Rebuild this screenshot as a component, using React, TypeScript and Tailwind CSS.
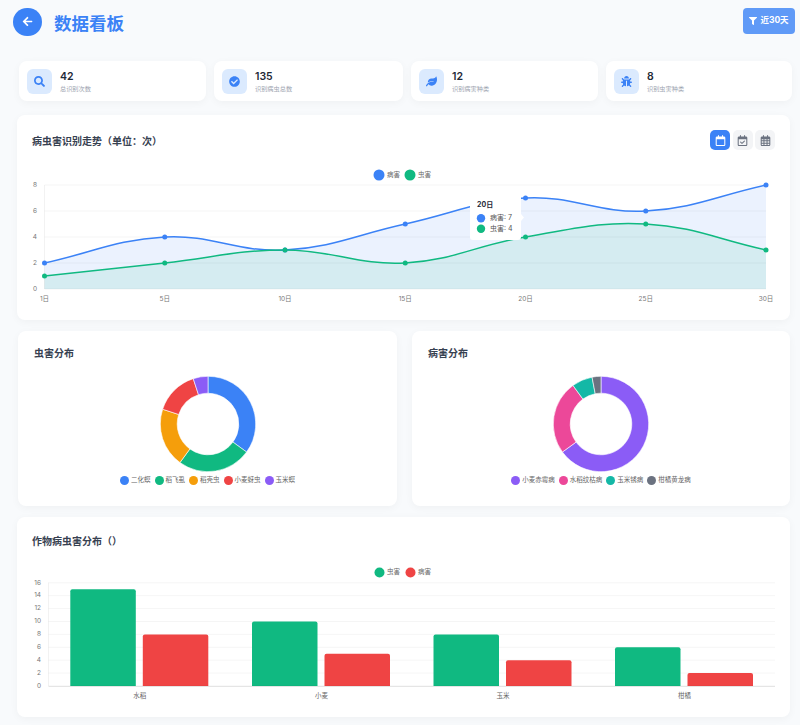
import { ReactNode } from "react";
import { FaArrowLeft, FaBug, FaCheckCircle, FaFilter, FaLeaf, FaSearch } from "react-icons/fa";
import { FaRegCalendar, FaRegCalendarCheck, FaRegCalendarDays } from "react-icons/fa6";

const BLUE = "#3b82f6";
const GREEN = "#10b981";
const RED = "#ef4444";

const stats = [
  { value: "42", label: "总识别次数", icon: <FaSearch /> },
  { value: "135", label: "识别病虫总数", icon: <FaCheckCircle /> },
  { value: "12", label: "识别病害种类", icon: <FaLeaf /> },
  { value: "8", label: "识别虫害种类", icon: <FaBug /> },
];

const days = ["1日", "5日", "10日", "15日", "20日", "25日", "30日"];
const diseaseTrend = [2, 4, 3, 5, 7, 6, 8];
const pestTrend = [1, 2, 3, 2, 4, 5, 3];

const pestSlices = [
  { name: "二化螟", value: 35, color: BLUE },
  { name: "稻飞虱", value: 25, color: GREEN },
  { name: "稻壳虫", value: 20, color: "#f59e0b" },
  { name: "小麦蚜虫", value: 15, color: RED },
  { name: "玉米螟", value: 5, color: "#8b5cf6" },
];

const diseaseSlices = [
  { name: "小麦赤霉病", value: 65, color: "#8b5cf6" },
  { name: "水稻纹枯病", value: 25, color: "#ec4899" },
  { name: "玉米锈病", value: 7, color: "#14b8a6" },
  { name: "柑橘黄龙病", value: 3, color: "#6b7280" },
];

const crops = [
  { name: "水稻", pest: 15, disease: 8, x: 70.3 },
  { name: "小麦", pest: 10, disease: 5, x: 252 },
  { name: "玉米", pest: 8, disease: 4, x: 433.5 },
  { name: "柑橘", pest: 6, disease: 2, x: 615 },
];

// same control points as a 0.4 tension line chart
function splinePath(points: [number, number][]) {
  const t = 0.4;
  const controls = points.map((p, i) => {
    const prev = points[i - 1] ?? p;
    const next = points[i + 1] ?? p;
    const d01 = Math.hypot(p[0] - prev[0], p[1] - prev[1]);
    const d12 = Math.hypot(next[0] - p[0], next[1] - p[1]);
    const total = d01 + d12 || 1;
    const fa = (t * d01) / total;
    const fb = (t * d12) / total;
    return {
      before: [p[0] - fa * (next[0] - prev[0]), p[1] - fa * (next[1] - prev[1])],
      after: [p[0] + fb * (next[0] - prev[0]), p[1] + fb * (next[1] - prev[1])],
    };
  });
  let d = `M${points[0][0]} ${points[0][1]}`;
  for (let i = 1; i < points.length; i++) {
    const a = controls[i - 1].after;
    const b = controls[i].before;
    d += ` C${a[0]} ${a[1]} ${b[0]} ${b[1]} ${points[i][0]} ${points[i][1]}`;
  }
  return d;
}

function Card({ children, className = "" }: { children: ReactNode; className?: string }) {
  return (
    <div className={`rounded-[8px] bg-white shadow-[0_2px_8px_rgba(0,0,0,0.04)] ${className}`}>{children}</div>
  );
}

function TrendChart() {
  const xAt = (i: number) => 44.5 + i * 120.25;
  const yAt = (v: number) => 289 - v * 13;
  const disease = diseaseTrend.map((v, i) => [xAt(i), yAt(v)] as [number, number]);
  const pest = pestTrend.map((v, i) => [xAt(i), yAt(v)] as [number, number]);
  const close = `L${xAt(6)} 289 L${xAt(0)} 289 Z`;

  return (
    <svg className="block" width="773" height="155" viewBox="17 165 773 155">
      {[0, 2, 4, 6, 8].map((v) => (
        <g key={v}>
          <line x1="44.5" x2="766" y1={yAt(v)} y2={yAt(v)} stroke="#000" strokeOpacity="0.04" />
          <text x="37" y={yAt(v)} textAnchor="end" dominantBaseline="middle" fontSize="6.5" fill="#777">
            {v}
          </text>
        </g>
      ))}
      <line x1="44.5" x2="44.5" y1="185" y2="289" stroke="#000" strokeOpacity="0.05" />
      {days.map((d, i) => (
        <text key={d} x={xAt(i)} y="299.5" textAnchor="middle" dominantBaseline="middle" fontSize="6.5" fill="#777">
          {d}
        </text>
      ))}
      <path d={`${splinePath(disease)} ${close}`} fill={BLUE} fillOpacity="0.1" />
      <path d={`${splinePath(pest)} ${close}`} fill={GREEN} fillOpacity="0.1" />
      <path d={splinePath(disease)} fill="none" stroke={BLUE} strokeWidth="1.5" />
      <path d={splinePath(pest)} fill="none" stroke={GREEN} strokeWidth="1.5" />
      {disease.map((p) => (
        <circle key={p[0]} cx={p[0]} cy={p[1]} r="2.5" fill={BLUE} />
      ))}
      {pest.map((p) => (
        <circle key={p[0]} cx={p[0]} cy={p[1]} r="2.5" fill={GREEN} />
      ))}
      <circle cx="379" cy="175" r="5.5" fill={BLUE} />
      <text x="387" y="175" dominantBaseline="middle" fontSize="6.5" fill="#666">
        病害
      </text>
      <circle cx="410" cy="175" r="5.5" fill={GREEN} />
      <text x="418" y="175" dominantBaseline="middle" fontSize="6.5" fill="#666">
        虫害
      </text>
      <path d="M521 214 L524 217.5 L521 221 Z" fill="#fff" />
      <rect x="470" y="194" width="51" height="46" rx="3" fill="#fff" />
      <text x="477" y="205" dominantBaseline="middle" fontSize="7" fontWeight="700" fill="#1f2937">
        20日
      </text>
      <circle cx="481" cy="218.3" r="4.2" fill={BLUE} />
      <text x="490" y="218.3" dominantBaseline="middle" fontSize="7" fill="#555">
        病害: 7
      </text>
      <circle cx="481" cy="228.8" r="4.2" fill={GREEN} />
      <text x="490" y="228.8" dominantBaseline="middle" fontSize="7" fill="#555">
        虫害: 4
      </text>
    </svg>
  );
}

function Donut({ slices }: { slices: { name: string; value: number; color: string }[] }) {
  const cx = 50;
  const cy = 50;
  const outer = 47.7;
  const inner = 30.8;
  let start = 0;
  const at = (r: number, deg: number) => {
    const a = ((deg - 90) * Math.PI) / 180;
    return `${cx + r * Math.cos(a)} ${cy + r * Math.sin(a)}`;
  };

  return (
    <svg className="block" width="100" height="100" viewBox="0 0 100 100">
      {slices.map((s) => {
        const from = start;
        const to = start + s.value * 3.6;
        start = to;
        const large = to - from > 180 ? 1 : 0;
        return (
          <path
            key={s.name}
            d={`M${at(outer, from)} A${outer} ${outer} 0 ${large} 1 ${at(outer, to)} L${at(inner, to)} A${inner} ${inner} 0 ${large} 0 ${at(inner, from)} Z`}
            fill={s.color}
            stroke="#fff"
            strokeWidth="0.6"
            strokeLinejoin="round"
          />
        );
      })}
    </svg>
  );
}

function DonutCard({ title, slices }: { title: string; slices: { name: string; value: number; color: string }[] }) {
  return (
    <Card className="h-[175px] pt-[15px]">
      <h3 className="pl-[16px] text-[10px] leading-[15px] font-bold text-[#374151]">{title}</h3>
      <div className="mt-[13px] flex justify-center">
        <Donut slices={slices} />
      </div>
      <div className="mt-[2px] flex items-center justify-center gap-[4px]">
        {slices.map((s) => (
          <span key={s.name} className="flex items-center gap-[2px] text-[6.5px] leading-[9px] text-[#666]">
            <i className="h-[9px] w-[9px] rounded-full" style={{ backgroundColor: s.color }} />
            {s.name}
          </span>
        ))}
      </div>
    </Card>
  );
}

function CropChart() {
  const yAt = (v: number) => 686 - v * 6.45;

  return (
    <svg className="block" width="773" height="155" viewBox="17 562 773 155">
      {[0, 2, 4, 6, 8, 10, 12, 14, 16].map((v) => (
        <g key={v}>
          {v > 0 && <line x1="48.5" x2="775" y1={yAt(v)} y2={yAt(v)} stroke="#000" strokeOpacity="0.04" />}
          <text x="41" y={yAt(v)} textAnchor="end" dominantBaseline="middle" fontSize="6.5" fill="#777">
            {v}
          </text>
        </g>
      ))}
      <line x1="48.5" x2="48.5" y1="582.5" y2="686" stroke="#000" strokeOpacity="0.05" />
      {crops.map((c) => (
        <g key={c.name}>
          <path
            d={`M${c.x} 686 V${yAt(c.pest) + 2} q0 -2 2 -2 H${c.x + 63.5} q2 0 2 2 V686 Z`}
            fill={GREEN}
          />
          <path
            d={`M${c.x + 72.5} 686 V${yAt(c.disease) + 2} q0 -2 2 -2 H${c.x + 136} q2 0 2 2 V686 Z`}
            fill={RED}
          />
          <text x={c.x + 69.5} y="696.5" textAnchor="middle" dominantBaseline="middle" fontSize="6.5" fill="#666">
            {c.name}
          </text>
        </g>
      ))}
      <line x1="48.5" x2="775" y1="686.3" y2="686.3" stroke="#000" strokeOpacity="0.13" />
      <circle cx="379.5" cy="572.5" r="5" fill={GREEN} />
      <text x="387" y="572.5" dominantBaseline="middle" fontSize="6.5" fill="#666">
        虫害
      </text>
      <circle cx="410.5" cy="572.5" r="5" fill={RED} />
      <text x="418" y="572.5" dominantBaseline="middle" fontSize="6.5" fill="#666">
        病害
      </text>
    </svg>
  );
}

export default function App() {
  return (
    <div className="h-[725px] overflow-hidden bg-[#f8fafc] pt-[7px] pr-[10px] pl-[17px] font-[Inter,'Noto_Sans_CJK_SC',sans-serif]">
      <header className="flex h-[29px] items-center">
        <button className="-ml-[4px] flex h-[28px] w-[29px] items-center justify-center rounded-full bg-[#3b82f6] text-[11px] text-white">
          <FaArrowLeft />
        </button>
        <h1 className="ml-[12px] pt-[5px] text-[17.5px] font-bold text-[#3b82f6]">数据看板</h1>
        <button className="mr-[-5px] ml-auto flex h-[26px] w-[52px] translate-y-[-1px] items-center justify-center gap-[3px] rounded-[4px] bg-[#609af7] text-[8.5px] font-bold text-white">
          <FaFilter className="text-[8px]" />
          近30天
        </button>
      </header>

      <div className="mt-[25px] ml-[2px] grid grid-cols-[187px_189px_187px_186px] gap-x-[8px]">
        {stats.map((s) => (
          <Card key={s.label} className="flex h-[40px] items-center pl-[8px]">
            <div className="flex h-[25px] w-[25px] items-center justify-center rounded-[6px] bg-[#dbeafe] text-[11px] text-[#3b82f6]">
              {s.icon}
            </div>
            <div className="ml-[8px]">
              <div className="text-[10.5px] leading-[14px] font-semibold text-[#1f2937]">{s.value}</div>
              <div className="text-[6.2px] leading-[9px] text-[#9ca3af]">{s.label}</div>
            </div>
          </Card>
        ))}
      </div>

      <Card className="mt-[14px] h-[205px]">
        <div className="flex h-[50px] items-start justify-between pt-[15px] pr-[15px] pl-[15px]">
          <h3 className="pt-[3px] text-[10px] leading-[16px] font-bold text-[#374151]">病虫害识别走势（单位：次）</h3>
          <div className="flex gap-[2.5px]">
            <button className="flex h-[20px] w-[20px] items-center justify-center rounded-[5px] bg-[#3b82f6] text-[11px] text-white">
              <FaRegCalendar />
            </button>
            <button className="flex h-[20px] w-[20px] items-center justify-center rounded-[5px] bg-[#f3f4f6] text-[11px] text-[#6b7280]">
              <FaRegCalendarCheck />
            </button>
            <button className="flex h-[20px] w-[20px] items-center justify-center rounded-[5px] bg-[#f3f4f6] text-[11px] text-[#6b7280]">
              <FaRegCalendarDays />
            </button>
          </div>
        </div>
        <TrendChart />
      </Card>

      <div className="mt-[11px] ml-[1px] grid grid-cols-[379px_378px] gap-x-[15px]">
        <DonutCard title="虫害分布" slices={pestSlices} />
        <DonutCard title="病害分布" slices={diseaseSlices} />
      </div>

      <Card className="mt-[11px] h-[200px]">
        <div className="h-[45px] pt-[16px] pl-[15px]">
          <h3 className="text-[10px] leading-[16px] font-bold text-[#374151]">作物病虫害分布（）</h3>
        </div>
        <CropChart />
      </Card>
    </div>
  );
}
